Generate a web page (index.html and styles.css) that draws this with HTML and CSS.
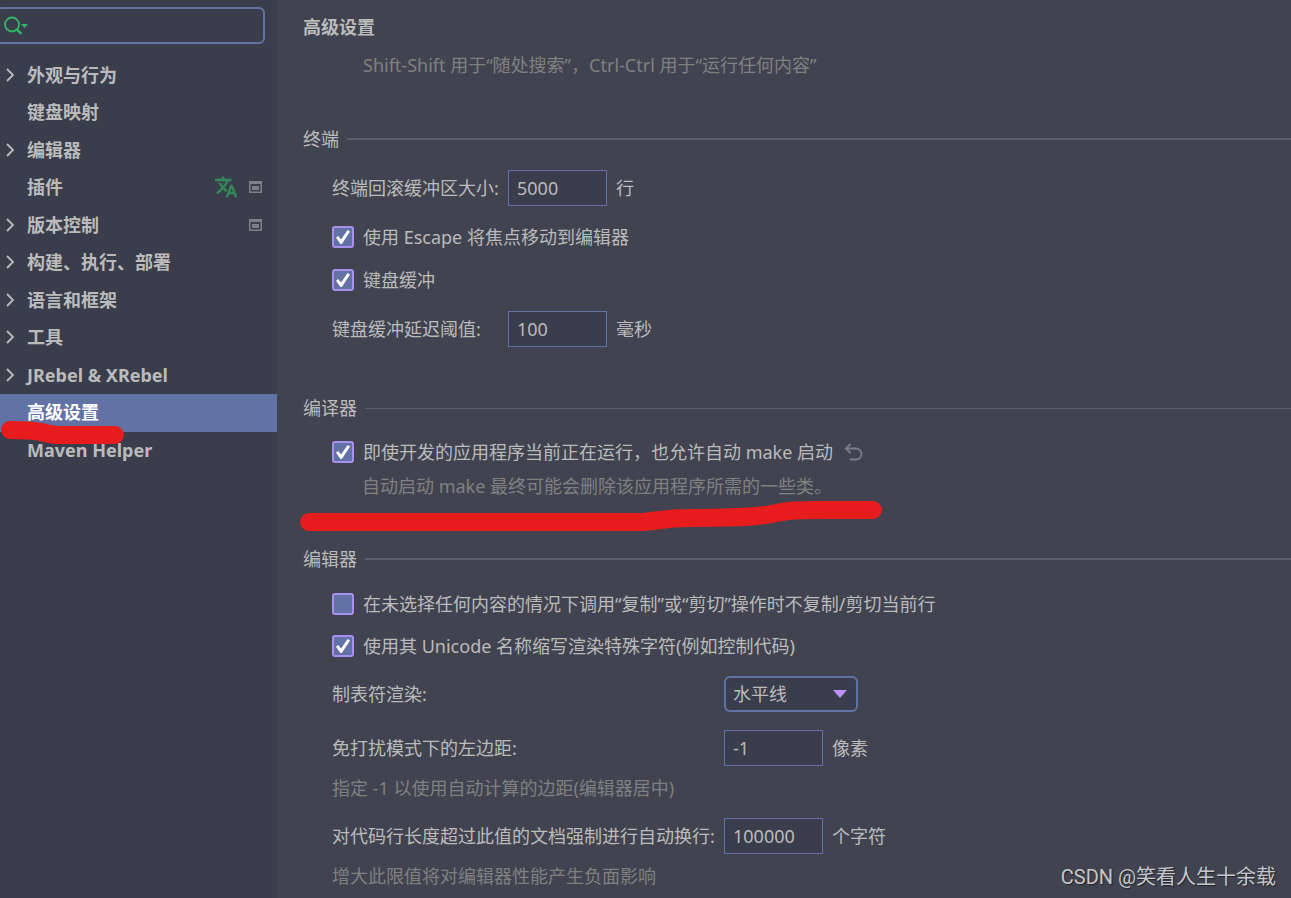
FILE: index.html
```
<!DOCTYPE html>
<html lang="zh-CN">
<head>
	<meta charset="UTF-8">
	<meta name="viewport" content="width=device-width, initial-scale=1">
	<title>高级设置</title>
	<link rel="stylesheet" href="styles.css">
</head>
<body>
	<svg class="symbols" width="0" height="0" aria-hidden="true">
		<symbol id="chevron" viewBox="0 0 10 16">
			<path d="M1 2L7 8L1 14" fill="none" stroke="currentColor" stroke-width="1.800"/>
		</symbol>
		<symbol id="project" viewBox="0 0 13 12">
			<path d="M0 0H13V12H0ZM1.500 3V10.500H11.500V3Z" fill="currentColor" fill-rule="evenodd"/>
			<path d="M3 5H10V9H3Z" fill="currentColor"/>
		</symbol>
	</svg>
	<aside class="sidebar">
		<div class="search">
			<svg class="search-icon" width="26" height="20" viewBox="0 0 26 20" aria-hidden="true">
				<circle cx="9" cy="8.500" r="7" fill="none" stroke="#30b868" stroke-width="1.800"/>
				<path d="M13.500 13L18.500 18" stroke="#30b868" stroke-width="2.400"/>
				<path d="M18 8H25L21.500 12Z" fill="#30b868"/>
			</svg>
			<input type="text" aria-label="搜索">
		</div>
		<nav>
			<ul class="tree">
				<li><a href="#"><svg class="arrow"><use href="#chevron"/></svg><span>外观与行为</span></a></li>
				<li><a href="#"><span>键盘映射</span></a></li>
				<li><a href="#"><svg class="arrow"><use href="#chevron"/></svg><span>编辑器</span></a></li>
				<li>
					<a href="#">
						<span>插件</span>
						<svg class="translate" viewBox="1 1 22 22"><path fill="currentColor" stroke="currentColor" stroke-width=".6" d="M12.870 15.070l-2.540-2.510.030-.030c1.740-1.940 2.980-4.170 3.710-6.530H17V4h-7V2H8v2H1v1.990h11.170C11.500 7.920 10.440 9.750 9 11.350 8.070 10.320 7.300 9.190 6.690 8h-2c.730 1.630 1.730 3.170 2.980 4.560l-5.090 5.020L4 19l5-5 3.110 3.110.760-2.040zM18.500 10h-2L12 22h2l1.120-3h4.750L21 22h2l-4.500-12zm-2.620 7l1.620-4.330L19.120 17h-3.240z"/></svg>
						<svg class="project"><use href="#project"/></svg>
					</a>
				</li>
				<li><a href="#"><svg class="arrow"><use href="#chevron"/></svg><span>版本控制</span><svg class="project"><use href="#project"/></svg></a></li>
				<li><a href="#"><svg class="arrow"><use href="#chevron"/></svg><span>构建、执行、部署</span></a></li>
				<li><a href="#"><svg class="arrow"><use href="#chevron"/></svg><span>语言和框架</span></a></li>
				<li><a href="#"><svg class="arrow"><use href="#chevron"/></svg><span>工具</span></a></li>
				<li><a href="#"><svg class="arrow"><use href="#chevron"/></svg><span>JRebel &amp; XRebel</span></a></li>
				<li class="active">
					<a href="#" aria-current="page"><span>高级设置</span></a>
					<svg class="mark mark-item" width="126" height="28" viewBox="0 0 126 28" aria-hidden="true">
						<path d="M10 11C22 11 32 11 41 13C48 15 52 16 60 16H115" fill="none" stroke="#e71d1d" stroke-width="18" stroke-linecap="round"/>
					</svg>
				</li>
				<li><a href="#"><span>Maven Helper</span></a></li>
			</ul>
		</nav>
	</aside>
	<main class="content">
		<h1>高级设置</h1>
		<p class="intro">Shift-Shift 用于“随处搜索”，Ctrl-Ctrl 用于“运行任何内容”</p>

		<section class="group">
			<h2>终端</h2>
			<div class="rows">
				<div class="field">
					<label for="scrollback">终端回滚缓冲区大小:</label>
					<input type="text" id="scrollback" value="5000">
					<span>行</span>
				</div>
				<label class="check"><input type="checkbox" checked>使用 Escape 将焦点移动到编辑器</label>
				<label class="check"><input type="checkbox" checked>键盘缓冲</label>
				<div class="field">
					<label for="delay">键盘缓冲延迟阈值:</label>
					<input type="text" id="delay" value="100">
					<span>毫秒</span>
				</div>
			</div>
		</section>

		<section class="group compiler">
			<h2>编译器</h2>
			<div class="rows">
				<div>
					<div class="check-line">
						<label class="check"><input type="checkbox" checked>即使开发的应用程序当前正在运行，也允许自动 make 启动</label>
						<button class="reset" type="button" aria-label="还原">
							<svg width="20" height="20" viewBox="0 0 20 20"><path d="M6.500 2L2 6.500L6.500 11M2 6.500H12A5.500 5.500 0 0 1 12 17.500H6" fill="none" stroke="currentColor" stroke-width="1.800"/></svg>
						</button>
					</div>
					<p class="hint indent">自动启动 make 最终可能会删除该应用程序所需的一些类。</p>
				</div>
			</div>
			<svg class="mark mark-group" width="586" height="32" viewBox="0 0 586 32" aria-hidden="true">
				<path d="M10 22H343C359 21 367 18 390 18C425 17 448 19 472 14C490 10 500 10 520 10H574" fill="none" stroke="#e71d1d" stroke-width="18" stroke-linecap="round"/>
			</svg>
		</section>

		<section class="group editor">
			<h2>编辑器</h2>
			<div class="rows">
				<label class="check"><input type="checkbox">在未选择任何内容的情况下调用“复制”或“剪切”操作时不复制/剪切当前行</label>
				<label class="check"><input type="checkbox" checked>使用其 Unicode 名称缩写渲染特殊字符(例如控制代码)</label>
				<div class="field">
					<label for="tabs">制表符渲染:</label>
					<div class="select">
						<select id="tabs">
							<option>水平线</option>
						</select>
						<svg width="14" height="8" viewBox="0 0 14 8" aria-hidden="true"><path d="M0 0H14L7 8Z" fill="#bd93f9"/></svg>
					</div>
				</div>
				<div>
					<div class="field">
						<label for="margin">免打扰模式下的左边距:</label>
						<input type="text" id="margin" value="-1">
						<span>像素</span>
					</div>
					<p class="hint">指定 -1 以使用自动计算的边距(编辑器居中)</p>
				</div>
				<div>
					<div class="field">
						<label for="wrap">对代码行长度超过此值的文档强制进行自动换行:</label>
						<input type="text" id="wrap" value="100000">
						<span>个字符</span>
					</div>
					<p class="hint">增大此限值将对编辑器性能产生负面影响</p>
				</div>
			</div>
		</section>
		<div class="watermark">CSDN @笑看人生十余载</div>
	</main>
</body>
</html>
```
FILE: styles.css
```
*{
	box-sizing: border-box;
}
body{
	display: flex;
	min-height: 100vh;
	margin: 0;
	background-color: #414450;
	color: #bbbbbb;
	font: 18px/24px "Noto Sans", "Noto Sans CJK SC", sans-serif;
}
h1, h2, p, ul{
	margin: 0;
	padding: 0;
}
input, select, button{
	margin: 0;
	color: inherit;
	font: inherit;
}
.symbols{
	position: absolute;
}

/* sidebar */
.sidebar{
	flex: 0 0 277px;
	min-width: 0;
	padding-top: 7px;
	background-color: #3a3d4c;
}
.search{
	display: flex;
	align-items: center;
	height: 37px;
	margin: 0 12px 13px -4px;
	padding-left: 5px;
	border: 2px solid #6272a4;
	border-radius: 6px;
}
.search-icon{
	flex: none;
}
.search input{
	flex: 1;
	min-width: 0;
	border: none;
	outline: none;
	background: none;
}
.tree{
	list-style: none;
	font-weight: 700;
}
.tree li{
	position: relative;
	height: 37px;
}
.tree li:nth-child(even){
	height: 38px;
}
.tree a{
	display: flex;
	align-items: center;
	height: 100%;
	padding: 0 15px 2px 6px;
	color: inherit;
	text-decoration: none;
}
.tree span{
	flex: 1;
}
.tree span:first-child{
	padding-left: 21px;
}
.tree .active{
	z-index: 1;
	background-color: #6272a4;
	color: #ffffff;
}
.arrow{
	width: 10px;
	height: 16px;
	margin-right: 11px;
}
.translate{
	width: 22px;
	height: 22px;
	margin-right: 12px;
	color: #35895a;
}
.project{
	width: 13px;
	height: 12px;
	color: #7d808a;
}

/* settings */
.content{
	position: relative;
	flex: 1;
	min-width: 0;
	padding: 15px 0 0 26px;
}
h1{
	font-size: 18px;
	font-weight: 700;
}
.intro{
	margin: 14px 0 50px 60px;
	color: #808080;
}
.group{
	position: relative;
	margin-bottom: 49px;
}
.group:last-of-type{
	margin-bottom: 0;
}
h2{
	display: flex;
	align-items: center;
	margin-bottom: 19px;
	font-size: 18px;
	font-weight: 400;
}
h2::after{
	content: "";
	flex: 1;
	height: 2px;
	margin-left: 8px;
	background-color: #5c5d66;
}
.compiler h2{
	margin-bottom: 20px;
}
.compiler h2::after{
	height: 1px;
}
.rows{
	display: flex;
	flex-direction: column;
	gap: 19px;
	padding-left: 29px;
}
.field{
	display: grid;
	grid-template-columns: 176px max-content 1fr;
	align-items: center;
}
.editor h2{
	margin-bottom: 21px;
}
.editor .rows{
	gap: 18px;
}
.editor .field{
	grid-template-columns: 392px max-content 1fr;
}
.field label{
	white-space: nowrap;
}
.field input{
	width: 99px;
	height: 36px;
	padding: 0 8px;
	border: 1px solid #6272a4;
	outline: 0;
	background-color: #3a3d4c;
}
.field span{
	margin-left: 9px;
}
.select{
	position: relative;
}
.select select{
	display: block;
	width: 134px;
	height: 36px;
	padding: 0 7px;
	border: 2px solid #6272a4;
	border-radius: 6px;
	background-color: #3a3d4c;
	appearance: none;
}
.select svg{
	position: absolute;
	top: 14px;
	right: 11px;
	pointer-events: none;
}
.check{
	display: flex;
	align-items: center;
}
.check input{
	display: grid;
	place-items: center;
	flex: none;
	width: 22px;
	height: 22px;
	margin-right: 9px;
	border: 2px solid #a98ff0;
	border-radius: 3px;
	background-color: #6272a4;
	appearance: none;
}
.check input:checked::before{
	content: "";
	width: 14px;
	height: 14px;
	background-color: #ffffff;
	clip-path: polygon(0 55%, 15% 43%, 36% 68%, 83% 0, 100% 10%, 42% 100%, 32% 100%);
}
.check-line{
	display: flex;
	align-items: center;
}
.reset{
	display: flex;
	margin-left: 11px;
	padding: 0;
	border: none;
	background: none;
	color: #7b7d87;
}
.hint{
	margin-top: 10px;
	color: #808080;
}
.indent{
	padding-left: 30px;
}

/* red marker strokes */
.mark{
	position: absolute;
	pointer-events: none;
}
.mark-item{
	top: 25px;
	left: 0;
}
.mark-group{
	top: 104px;
	left: -4px;
}
.watermark{
	position: absolute;
	right: 15px;
	bottom: 9px;
	color: #c6c7ca;
	font-family: Roboto, "Noto Sans CJK SC", sans-serif;
	font-size: 20px;
	text-shadow: 1px 1px 1px #22232a;
}
```
